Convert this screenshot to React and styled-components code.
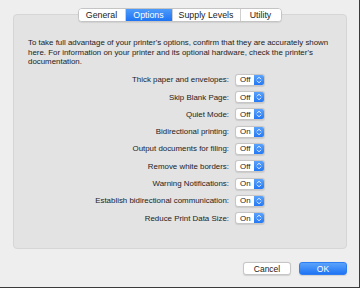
import React from 'react';
import styled, { createGlobalStyle } from 'styled-components';

const GlobalStyle = createGlobalStyle`
    html, body {
        margin: 0;
        padding: 0;
        background: #ececec;
    }
    * {
        box-sizing: border-box;
    }
`;

const Window = styled.div`
    width: 360px;
    height: 288px;
    background-color: #eeeeee;
    border-right: 1px solid #3a3a3a;
    border-bottom: 1px solid #3a3a3a;
    font-family: "Liberation Sans", Arial, sans-serif;
    color: #1e1e1e;
    display: flex;
    flex-direction: column;
    padding: 14px 12px 0 13px;
`;

const Panel = styled.div`
    height: 235px;
    background-color: #e3e3e3;
    border: 1px solid #d6d6d6;
    border-radius: 4px;
    display: flex;
    flex-direction: column;
    align-items: center;
`;

const TabBar = styled.div`
    display: flex;
    margin-top: -7px;
    background: #ffffff;
    border: 1px solid #c4c4c4;
    border-radius: 4px;
    box-shadow: 0 1px 1px rgba(0, 0, 0, 0.08);
    overflow: hidden;
    margin-left: -1px;
`;

const Tab = styled.div`
    height: 12px;
    width: ${p => p.$w}px;
    display: flex;
    align-items: center;
    justify-content: center;
    font-size: 8.8px;
    color: ${p => (p.$active ? '#ffffff' : '#222222')};
    background: ${p => (p.$active ? 'linear-gradient(#4d9bfb, #1f74f3)' : '#ffffff')};
    border-left: ${p => (p.$first ? 'none' : '1px solid #cfcfcf')};
`;

const Intro = styled.p`
    align-self: stretch;
    margin: 16px 16px 0 14px;
    font-size: 7.9px;
    line-height: 9.6px;
    color: #222;
`;

const Options = styled.div`
    display: grid;
    grid-template-columns: 1fr auto;
    column-gap: 6px;
    row-gap: 5.3px;
    align-items: center;
    align-self: stretch;
    margin: 7px 0 0 0;
    padding-right: 81px;
`;

const Label = styled.div`
    text-align: right;
    font-size: 7.9px;
    white-space: nowrap;
    color: #222;
`;

const Popup = styled.div`
    width: 30px;
    height: 12px;
    display: flex;
    background: #ffffff;
    border: 1px solid #c6c6c6;
    border-radius: 3px;
    overflow: hidden;
    box-shadow: 0 0.5px 1px rgba(0, 0, 0, 0.1);
`;

const PopupValue = styled.div`
    flex: 1;
    font-size: 7.9px;
    padding-left: 4px;
    display: flex;
    align-items: center;
    color: #222;
`;

const PopupArrows = styled.div`
    width: 10px;
    background: linear-gradient(#5aa2fb, #2479f4);
    display: flex;
    align-items: center;
    justify-content: center;
`;

const Footer = styled.div`
    display: flex;
    justify-content: flex-end;
    gap: 8px;
    margin-top: 13px;
`;

const Button = styled.div`
    width: 48px;
    height: 13px;
    border-radius: 3px;
    display: flex;
    align-items: center;
    justify-content: center;
    font-size: 8.5px;
    color: ${p => (p.$primary ? '#ffffff' : '#222222')};
    background: ${p => (p.$primary ? 'linear-gradient(#5ba3fb, #1f74f3)' : '#ffffff')};
    border: 1px solid ${p => (p.$primary ? '#2f7df2' : '#c6c6c6')};
    box-shadow: 0 0.5px 1px rgba(0, 0, 0, 0.12);
`;

const tabs = [
    { name: 'General', w: 46 },
    { name: 'Options', w: 47, active: true },
    { name: 'Supply Levels', w: 68 },
    { name: 'Utility', w: 41 },
];

const options = [
    ['Thick paper and envelopes:', 'Off'],
    ['Skip Blank Page:', 'Off'],
    ['Quiet Mode:', 'Off'],
    ['Bidirectional printing:', 'On'],
    ['Output documents for filing:', 'Off'],
    ['Remove white borders:', 'Off'],
    ['Warning Notifications:', 'On'],
    ['Establish bidirectional communication:', 'On'],
    ['Reduce Print Data Size:', 'On'],
];

const Arrows = () => (
    <svg width="6" height="8" viewBox="0 0 6 8">
        <path d="M1.2 3 L3 1.2 L4.8 3 M1.2 5 L3 6.8 L4.8 5" fill="none" stroke="#fff" strokeWidth="0.9" strokeLinecap="round" strokeLinejoin="round" />
    </svg>
);

const App = () => {
    return (
        <Window>
            <GlobalStyle />
            <Panel>
                <TabBar>
                    {tabs.map((t, i) => (
                        <Tab key={t.name} $w={t.w} $active={t.active} $first={i === 0}>{t.name}</Tab>
                    ))}
                </TabBar>
                <Intro>
                    To take full advantage of your printer's options, confirm that they are accurately shown
                    here. For information on your printer and its optional hardware, check the printer's
                    documentation.
                </Intro>
                <Options>
                    {options.map(([label, value]) => (
                        <React.Fragment key={label}>
                            <Label>{label}</Label>
                            <Popup>
                                <PopupValue>{value}</PopupValue>
                                <PopupArrows><Arrows /></PopupArrows>
                            </Popup>
                        </React.Fragment>
                    ))}
                </Options>
            </Panel>
            <Footer>
                <Button>Cancel</Button>
                <Button $primary>OK</Button>
            </Footer>
        </Window>
    );
};

export default App;
